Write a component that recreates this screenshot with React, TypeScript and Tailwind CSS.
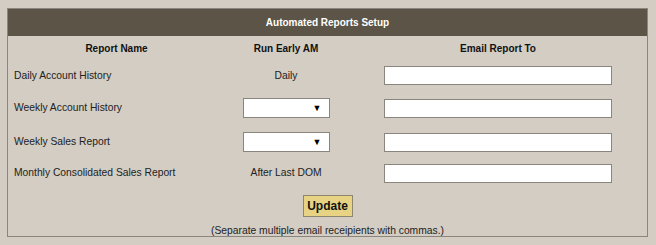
import React from "react";

const rows = [
  { name: "Daily Account History", run: "Daily", h: "h-[31px]" },
  { name: "Weekly Account History", run: null, h: "h-[34px]" },
  { name: "Weekly Sales Report", run: null, h: "h-[34px]" },
  { name: "Monthly Consolidated Sales Report", run: "After Last DOM", h: "h-[28px]" },
];

const Dropdown = () => (
  <div className="relative w-[87px] h-[20px] bg-white border border-[#8a857d]">
    <span className="absolute right-[7px] top-[3px] text-[9px] leading-[12px] text-black">▼</span>
  </div>
);

export default function App() {
  return (
    <div className="w-[656px] h-[245px] bg-[#d3cdc4] pt-[8px] pl-[7px] font-['Liberation_Sans',Arial,sans-serif] text-[10.3px] text-[#222]">
      <div className="w-[641px] h-[229px] border border-[#8a857d] flex flex-col">
        <div className="h-[27px] shrink-0 bg-[#5c5447] flex items-center justify-center text-white font-bold text-[10px]">
          Automated Reports Setup
        </div>

        <div className="grid grid-cols-[215px_126px_1fr] h-[24px] shrink-0 items-center font-bold text-[#111] text-[10px]">
          <div className="text-center pl-[2px]">Report Name</div>
          <div className="text-center">Run Early AM</div>
          <div className="text-center">Email Report To</div>
        </div>

        {rows.map((r) => (
          <div key={r.name} className={`grid grid-cols-[215px_126px_1fr] shrink-0 items-center ${r.h}`}>
            <div className="pl-[6px]">{r.name}</div>
            <div className="flex justify-center">{r.run ? <span>{r.run}</span> : <Dropdown />}</div>
            <div className="flex justify-center pr-[1px]">
              <div className="w-[228px] h-[19px] bg-white border border-[#8a857d]" />
            </div>
          </div>
        ))}

        <div className="h-[38px] shrink-0 flex items-center justify-center">
          <button className="w-[50px] h-[22px] bg-[#e8d384] border border-[#8f8670] font-bold text-[12px] text-[#111]">
            Update
          </button>
        </div>

        <div className="flex-1 min-h-0 flex items-center justify-center leading-[11px] text-[#222]">
          (Separate multiple email receipients with commas.)
        </div>
      </div>
    </div>
  );
}
